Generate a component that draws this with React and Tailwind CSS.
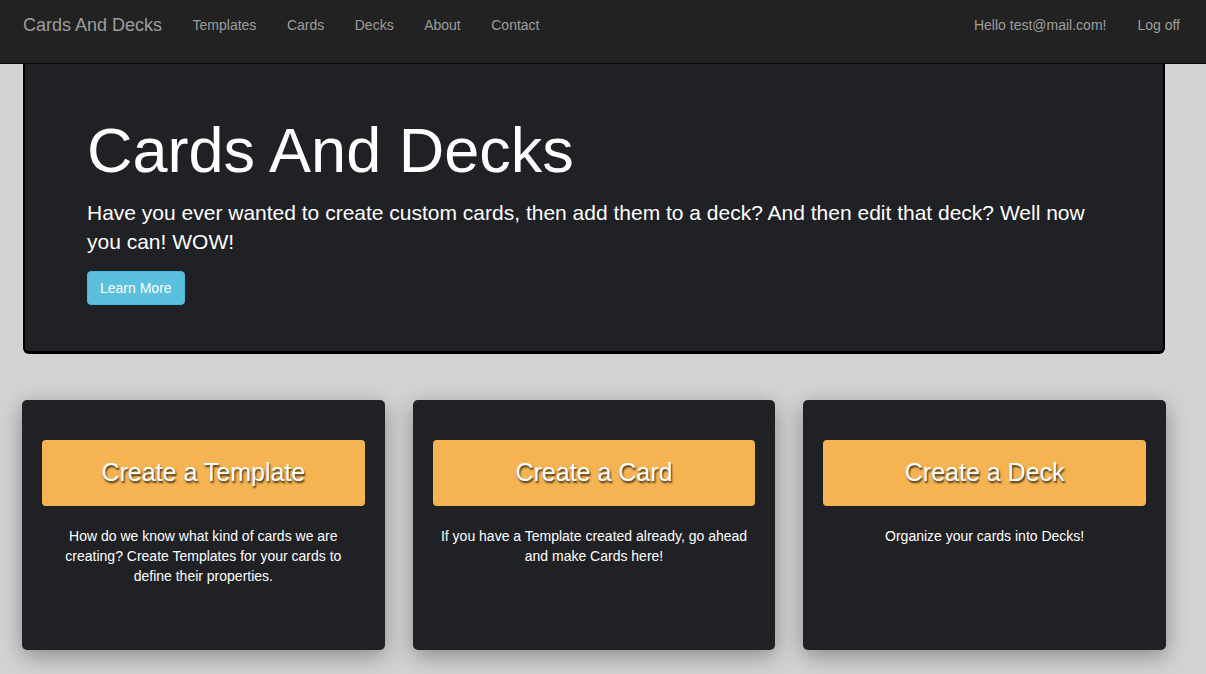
import React from 'react'

const navLinks = ['Templates', 'Cards', 'Decks', 'About', 'Contact']

const features = [
    { title: 'Create a Template', text: 'How do we know what kind of cards we are creating? Create Templates for your cards to define their properties.' },
    { title: 'Create a Card', text: 'If you have a Template created already, go ahead and make Cards here!' },
    { title: 'Create a Deck', text: 'Organize your cards into Decks!' },
]

const Navbar = () => (
    <nav className="h-16 bg-[#222222] border-b border-[#080808] flex items-start justify-between pl-[23px] pr-[26px]">
        <div className="flex items-start gap-[30.5px]">
            <a className="pt-[15px] text-[18px] leading-5 text-[#9d9d9d]">Cards And Decks</a>
            {navLinks.map(label => (
                <a key={label} className="pt-[15px] text-[14px] leading-5 text-[#9d9d9d]">{label}</a>
            ))}
        </div>
        <div className="flex items-start gap-[31px]">
            <a className="pt-[15px] text-[14px] leading-5 text-[#9d9d9d]">Hello test@mail.com!</a>
            <a className="pt-[15px] text-[14px] leading-5 text-[#9d9d9d]">Log off</a>
        </div>
    </nav>
)

const App = () => {
    return (
        <div className="min-h-[674px] bg-[#d3d3d3] font-['Liberation_Sans',Arial,sans-serif]">
            <Navbar />

            {/* Hero */}
            <div className="pl-[23px] w-[1165px]">
                <section className="bg-[#202125] border-2 border-t-0 border-black border-b-[3px] rounded-b-md pl-[62px] pr-[60px] pt-[52px] pb-[46px] text-white">
                    <h1 className="text-[63px] leading-[69px]">Cards And Decks</h1>
                    <p className="mt-[13px] text-[21px] leading-[29px]">
                        Have you ever wanted to create custom cards, then add them to a deck? And then edit that deck? Well now you can! WOW!
                    </p>
                    <button className="mt-[15px] h-[34px] px-3 rounded bg-[#5bc0de] border border-[#46b8da] text-[14px] text-white">
                        Learn More
                    </button>
                </section>
            </div>

            {/* Feature cards */}
            <div className="mt-[46px] pl-[22px] w-[1166px] grid grid-cols-3 gap-[28px] pb-6">
                {features.map(f => (
                    <div key={f.title} className="h-[250px] bg-[#202125] rounded-[5px] shadow-[0_6px_22px_rgba(0,0,0,0.35)] px-5 pt-10 text-white">
                        <button className="w-full h-[66px] rounded bg-[#f5b352] text-[25px] text-white [text-shadow:1px_2px_2px_rgba(0,0,0,0.75)]">
                            {f.title}
                        </button>
                        <p className="mt-5 px-[5px] text-[14px] leading-5 text-center">{f.text}</p>
                    </div>
                ))}
            </div>
        </div>
    )
}

export default App
